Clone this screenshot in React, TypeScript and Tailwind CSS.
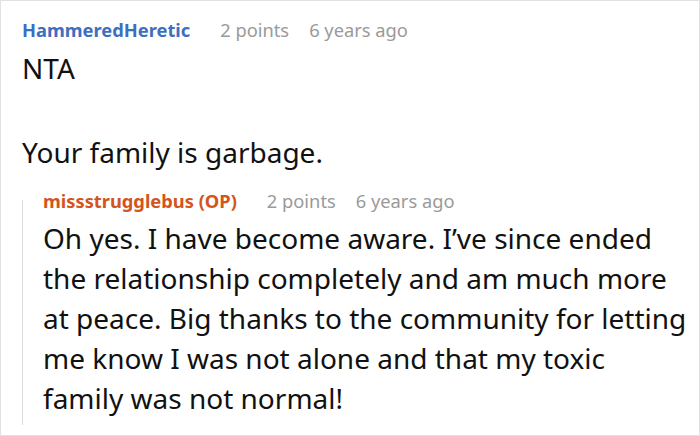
import React from "react";

export default function App() {
  return (
    <div
      className="w-[700px] h-[436px] bg-white border border-[#e2e2e2] overflow-hidden"
      style={{ fontFamily: '"Noto Sans", sans-serif' }}
    >
      <div className="pl-[21px] pt-[17px]">
        <div className="flex items-baseline text-[18.3px] leading-[24px]">
          <span className="font-bold text-[#3e6ebf]">HammeredHeretic</span>
          <span className="ml-[30px] text-[#9a9a9a]">2 points</span>
          <span className="ml-[20px] text-[#9a9a9a]">6 years ago</span>
        </div>
        <div className="text-[28px] leading-[42px] text-[#111] mt-[5px]">
          <p>NTA</p>
          <p className="mt-[42px]">Your family is garbage.</p>
        </div>
        <div className="mt-[16px] flex">
          <div className="w-px bg-[#dddddd] mt-[11px] mb-[-7px]" />
          <div className="pl-[20px]">
            <div className="flex items-baseline text-[18.3px] leading-[24px]">
              <span className="font-bold text-[#d45420]">missstrugglebus (OP)</span>
              <span className="ml-[30px] text-[#9a9a9a]">2 points</span>
              <span className="ml-[20px] text-[#9a9a9a]">6 years ago</span>
            </div>
            <p className="mt-[5px] w-[645px] text-[28px] leading-[40px] text-[#111]">
              Oh yes. I have become aware. I’ve since ended the relationship completely and am much more at peace. Big thanks to the community for letting me know I was not alone and that my toxic family was not normal!
            </p>
          </div>
        </div>
      </div>
    </div>
  );
}
